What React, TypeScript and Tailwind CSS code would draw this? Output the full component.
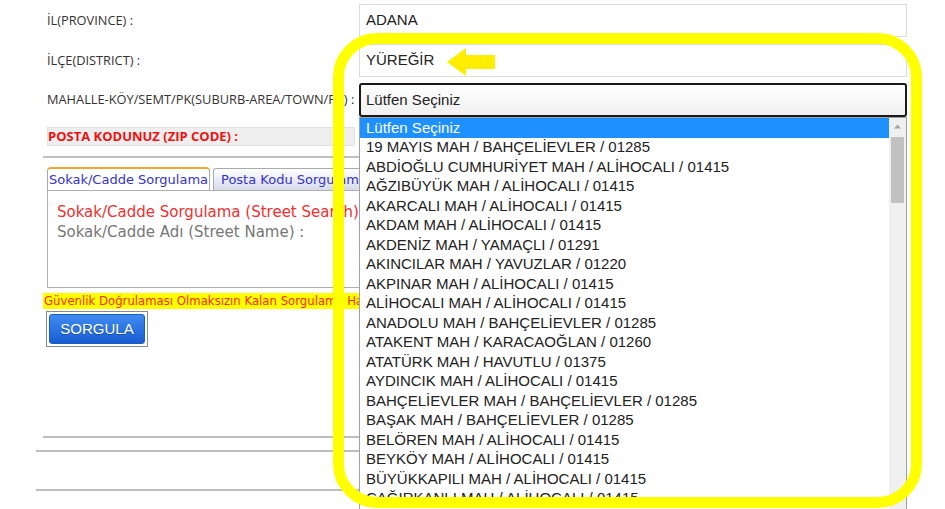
import React from "react";

const mahalleler = [
  "19 MAYIS MAH / BAHÇELİEVLER / 01285",
  "ABDİOĞLU CUMHURİYET MAH / ALİHOCALI / 01415",
  "AĞZIBÜYÜK MAH / ALİHOCALI / 01415",
  "AKARCALI MAH / ALİHOCALI / 01415",
  "AKDAM MAH / ALİHOCALI / 01415",
  "AKDENİZ MAH / YAMAÇLI / 01291",
  "AKINCILAR MAH / YAVUZLAR / 01220",
  "AKPINAR MAH / ALİHOCALI / 01415",
  "ALİHOCALI MAH / ALİHOCALI / 01415",
  "ANADOLU MAH / BAHÇELİEVLER / 01285",
  "ATAKENT MAH / KARACAOĞLAN / 01260",
  "ATATÜRK MAH / HAVUTLU / 01375",
  "AYDINCIK MAH / ALİHOCALI / 01415",
  "BAHÇELİEVLER MAH / BAHÇELİEVLER / 01285",
  "BAŞAK MAH / BAHÇELİEVLER / 01285",
  "BELÖREN MAH / ALİHOCALI / 01415",
  "BEYKÖY MAH / ALİHOCALI / 01415",
  "BÜYÜKKAPILI MAH / ALİHOCALI / 01415",
  "CAĞIRKANLI MAH / ALİHOCALI / 01415",
];

function FormRow({ label, children }: { label: string; children: React.ReactNode }) {
  return (
    <div className="flex items-center">
      <div className="w-[316px] whitespace-nowrap pl-1 font-['Open_Sans',sans-serif] text-[12.8px] text-[#333]">{label}</div>
      {children}
    </div>
  );
}

export default function App() {
  return (
    <div className="relative h-[509px] w-[945px] overflow-hidden bg-white">
      <div className="pl-[43px] pt-[4px]">
        {/* il / ilçe / mahalle */}
        <FormRow label="İL(PROVINCE) :">
          <div className="flex h-[33px] w-[548px] items-center border border-[#dcdcdc] pl-[6px] font-['Liberation_Sans',Arial,sans-serif] text-[15px] text-[#222]">
            ADANA
          </div>
        </FormRow>
        <div className="mt-[7px]">
          <FormRow label="İLÇE(DISTRICT) :">
            <div className="flex h-[33px] w-[548px] items-center border border-[#dcdcdc] pl-[6px] font-['Liberation_Sans',Arial,sans-serif] text-[15px] text-[#222]">
              YÜREĞİR
            </div>
          </FormRow>
        </div>
        <div className="mt-[6px]">
          <FormRow label="MAHALLE-KÖY/SEMT/PK(SUBURB-AREA/TOWN/PK) :">
            <div className="flex h-[34px] w-[548px] items-center rounded-[3px] border-2 border-[#1a1a1a] bg-gradient-to-b from-white to-[#f0f0f0] pl-[5px] font-['Liberation_Sans',Arial,sans-serif] text-[15px] text-[#222]">
              Lütfen Seçiniz
            </div>
          </FormRow>
        </div>

        {/* sol blok */}
        <div className="w-[330px]">
          <div className="ml-1 mt-[10px] flex h-[19px] w-[308px] items-center border border-[#e2e2e2] bg-[#eeeeee] font-['Open_Sans',sans-serif] text-[13px] font-bold text-[#ee1111]">
            POSTA KODUNUZ (ZIP CODE) :
          </div>
          <div className="mt-[10px] h-[2px] bg-[#c0c0c0]" />

          <div className="ml-1 mt-[9px] flex h-[23px] items-end gap-[3px] font-['DejaVu_Sans',Verdana,sans-serif] text-[13px] text-[#3333cc]">
            <div className="flex h-[23px] w-[163px] items-center justify-center rounded-t-[4px] border border-b-0 border-[#aaa] border-t-2 border-t-[#f0a830] bg-white">
              Sokak/Cadde Sorgulama
            </div>
            <div className="flex h-[22px] w-[160px] items-center rounded-t-[3px] border border-b-0 border-[#aaa] bg-gradient-to-b from-white to-[#d6dbea] pl-[7px]">
              Posta Kodu Sorgulama
            </div>
          </div>
          <div className="ml-1 h-[98px] border border-[#b0b0b0] px-[9px] pt-[11px] font-['DejaVu_Sans',Verdana,sans-serif] text-[15px] leading-[20px]">
            <div className="whitespace-nowrap text-[#f03030]">Sokak/Cadde Sorgulama (Street Search)</div>
            <div className="whitespace-nowrap text-[#777]">Sokak/Cadde Adı (Street Name) :</div>
          </div>

          <div className="mt-[5px] flex h-[16px] items-center whitespace-nowrap bg-[#ffff00] pl-[1px] font-['DejaVu_Sans_Condensed','DejaVu_Sans',sans-serif] text-[13px] text-[#ff2a00]">
            Güvenlik Doğrulaması Olmaksızın Kalan Sorgulama Hakkınız
          </div>

          <div className="ml-[3px] mt-[2px] w-[102px] border border-[#8a8a8a] p-[2px]">
            <div className="flex h-[30px] items-center justify-center rounded-[3px] border border-[#1b5bc4] bg-gradient-to-b from-[#3f8cf0] to-[#1a5cd2] font-['Liberation_Sans',Arial,sans-serif] text-[15px] text-white [text-shadow:0_1px_1px_rgba(0,0,0,0.3)]">
              SORGULA
            </div>
          </div>
        </div>

        <div className="mt-[89px] h-[2px] w-[320px] bg-[#bdbdbd]" />
        <div className="-ml-[7px] mt-[12px] h-[2px] w-[327px] bg-[#bdbdbd]" />
        <div className="-ml-[7px] mt-[37px] h-[2px] w-[327px] bg-[#bdbdbd]" />
      </div>

      {/* açık seçim listesi */}
      <div className="absolute left-[359px] top-[117px] flex h-[400px] w-[548px] border border-[#a0a0a0] bg-white font-['Liberation_Sans',Arial,sans-serif] text-[15px] text-[#222]">
        <div className="flex-1">
          <div className="flex h-[19.5px] items-center bg-[#1e90ff] pl-[6px] text-white">Lütfen Seçiniz</div>
          {mahalleler.map((m) => (
            <div key={m} className="flex h-[19.5px] items-center whitespace-nowrap pl-[6px]">
              {m}
            </div>
          ))}
        </div>
        <div className="flex w-[17px] flex-col items-center bg-[#f0f0f0]">
          <svg width="17" height="17" viewBox="0 0 17 17">
            <path d="M5 10.5 L8.5 6.5 L12 10.5 Z" fill="#a3a3a3" />
          </svg>
          <div className="mt-[2px] h-[66px] w-[13px] bg-[#c1c1c1]" />
        </div>
      </div>

      {/* sarı vurgu */}
      <div className="pointer-events-none absolute left-[333px] top-[33px] h-[475px] w-[589px] rounded-[44px] border-[11px] border-[#ffff00]" />
      <svg className="pointer-events-none absolute left-[447px] top-[48px]" width="50" height="28" viewBox="0 0 50 28">
        <polygon points="0,14 19,0 19,7 48,7 48,21 19,21 19,28" fill="#ffee00" />
      </svg>
    </div>
  );
}
